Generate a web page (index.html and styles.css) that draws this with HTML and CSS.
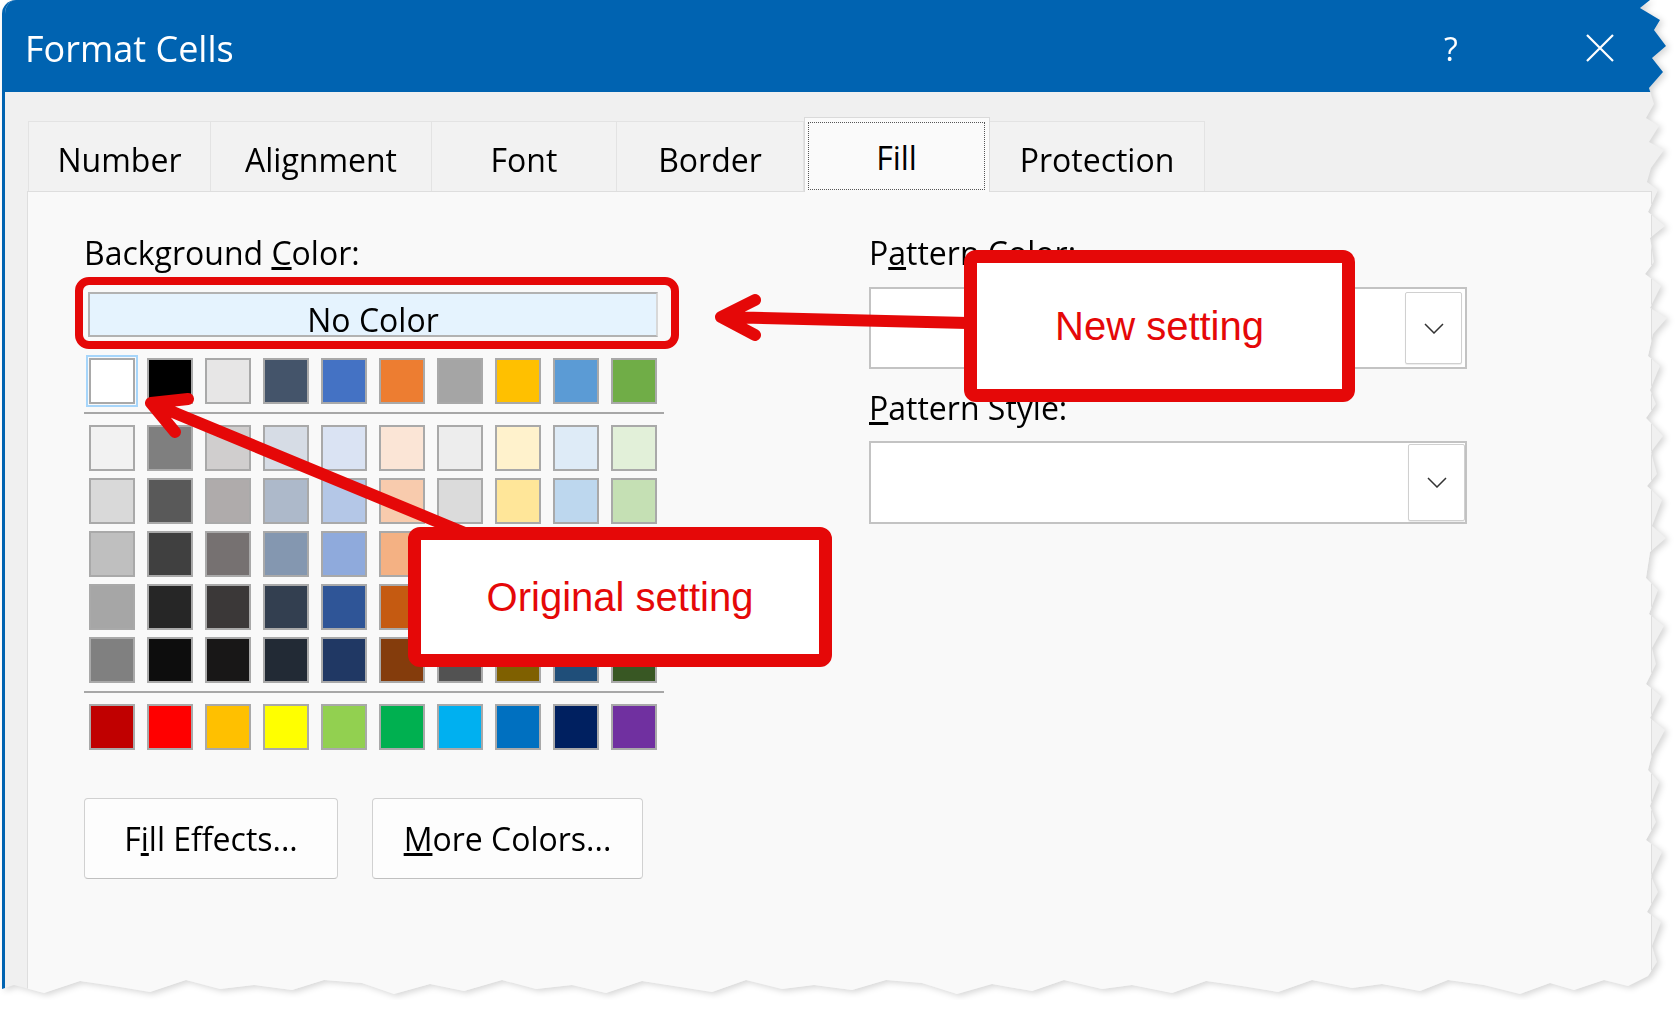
FILE: index.html
```html
<!DOCTYPE html>
<html lang="en">
<head>
  <meta charset="UTF-8">
  <title>Format Cells</title>
  <link rel="stylesheet" href="styles.css">
</head>
<body>
  <div class="sheet">
    <div class="dialog">
      <div class="titlebar">
        <span class="title">Format Cells</span>
        <span class="tb-help">?</span>
        <span class="tb-close">
          <svg width="28" height="28" viewBox="0 0 28 28"><path d="M1 1 L27 27 M27 1 L1 27" stroke="#fff" stroke-width="2.2" fill="none"/></svg>
        </span>
      </div>

      <div class="body">
        <div class="tabs">
          <div class="tab tab-first">Number</div>
          <div class="tab">Alignment</div>
          <div class="tab">Font</div>
          <div class="tab">Border</div>
          <div class="tab tab-active"><div class="focus">Fill</div></div>
          <div class="tab">Protection</div>
        </div>

        <div class="panel">
          <div class="col-left">
            <div class="label">Background <u>C</u>olor:</div>
            <div class="no-color">No Color</div>
            <div class="palette">
              <div class="row" id="rowMain"></div>
              <div class="sep"></div>
              <div class="theme" id="theme"></div>
              <div class="sep"></div>
              <div class="row" id="rowStandard"></div>
            </div>
            <div class="buttons">
              <button class="btn btn-fill">F<u>i</u>ll Effects...</button>
              <button class="btn btn-more"><u>M</u>ore Colors...</button>
            </div>
          </div>

          <div class="col-right">
            <div class="label">P<u>a</u>ttern Color:</div>
            <div class="select">
              <div class="select-btn">
                <svg width="20" height="11" viewBox="0 0 20 11"><polyline points="1,1 10,10 19,1" fill="none" stroke="#333" stroke-width="1.5"/></svg>
              </div>
            </div>
            <div class="label label-style"><u>P</u>attern Style:</div>
            <div class="select select-style">
              <div class="select-btn">
                <svg width="20" height="11" viewBox="0 0 20 11"><polyline points="1,1 10,10 19,1" fill="none" stroke="#333" stroke-width="1.5"/></svg>
              </div>
            </div>
          </div>
        </div>
      </div>
    </div>
  </div>

  <div class="annot">
    <svg width="1680" height="1013" viewBox="0 0 1680 1013">
      <rect x="79" y="281" width="596" height="64" rx="10" fill="none" stroke="#e50808" stroke-width="8"/>
      <g fill="none" stroke="#e50808" stroke-width="12" stroke-linecap="round" stroke-linejoin="round">
        <path d="M968 323 L721 317 M755 300 L721 317 L755 335"/>
        <path d="M472 536 L151 403 M188 399 L151 403 L175 432"/>
      </g>
    </svg>
    <div class="callout callout-new">New setting</div>
    <div class="callout callout-orig">Original setting</div>
  </div>

  <script>
    const mainRow = ["#ffffff", "#000000", "#e7e6e6", "#44546a", "#4472c4", "#ed7d31", "#a5a5a5", "#ffc000", "#5b9bd5", "#70ad47"];
    const themeRows = [
      ["#f2f2f2", "#7f7f7f", "#d0cece", "#d6dce5", "#dae3f3", "#fbe5d6", "#ededed", "#fff2cc", "#deebf7", "#e2f0d9"],
      ["#d9d9d9", "#595959", "#afabab", "#adb9ca", "#b4c7e7", "#f8cbad", "#dbdbdb", "#ffe699", "#bdd7ee", "#c5e0b4"],
      ["#bfbfbf", "#404040", "#767171", "#8497b0", "#8faadc", "#f4b183", "#c9c9c9", "#ffd966", "#9dc3e6", "#a9d18e"],
      ["#a6a6a6", "#262626", "#3b3838", "#333f50", "#2f5597", "#c55a11", "#7b7b7b", "#bf9000", "#2e75b6", "#548235"],
      ["#808080", "#0d0d0d", "#181717", "#222a35", "#203864", "#843c0c", "#525252", "#7f6000", "#1f4e79", "#385723"]
    ];
    const standard = ["#c00000", "#ff0000", "#ffc000", "#ffff00", "#92d050", "#00b050", "#00b0f0", "#0070c0", "#002060", "#7030a0"];

    function fillRow(el, colors) {
      colors.forEach(c => {
        const d = document.createElement("div");
        d.className = "swatch";
        d.style.background = c;
        el.appendChild(d);
      });
    }

    fillRow(document.getElementById("rowMain"), mainRow);
    document.querySelector("#rowMain .swatch").classList.add("selected");
    const theme = document.getElementById("theme");
    themeRows.forEach(r => {
      const row = document.createElement("div");
      row.className = "row";
      fillRow(row, r);
      theme.appendChild(row);
    });
    fillRow(document.getElementById("rowStandard"), standard);
  </script>
</body>
</html>
```

FILE: styles.css
```css
body { margin: 0; background: #fff; font-family: "Open Sans", "Noto Sans", sans-serif; color: #000; }

.sheet { width: 1670px; height: 1000px; margin-left: 2px; filter: drop-shadow(3px 2px 3px rgba(0,0,0,.16)); }
.dialog {
  height: 100%; box-sizing: border-box; background: #f0f0f0;
  border-left: 3px solid #0063b1; border-top-left-radius: 14px; overflow: hidden;
  clip-path: polygon(0 0, 1648px 0, 1638px 8px, 1658px 20px, 1652px 30px, 1664px 46px, 1650px 58px, 1661px 72px, 1647px 88px, 1652px 104px, 1644px 118px, 1657px 126px, 1647px 142px, 1662px 150px, 1649px 168px, 1645px 182px, 1656px 190px, 1646px 212px, 1663px 226px, 1648px 238px, 1652px 262px, 1643px 274px, 1659px 286px, 1648px 308px, 1665px 318px, 1651px 334px, 1646px 356px, 1658px 366px, 1648px 390px, 1654px 404px, 1644px 418px, 1661px 436px, 1649px 452px, 1655px 474px, 1645px 486px, 1660px 500px, 1650px 526px, 1664px 538px, 1648px 552px, 1644px 578px, 1656px 590px, 1647px 614px, 1662px 626px, 1650px 648px, 1654px 664px, 1644px 684px, 1659px 696px, 1648px 718px, 1663px 730px, 1650px 754px, 1646px 770px, 1657px 782px, 1648px 806px, 1654px 822px, 1644px 840px, 1660px 852px, 1649px 876px, 1656px 892px, 1645px 912px, 1659px 922px, 1650px 946px, 1655px 962px, 1646px 976px, 1626px 986px, 1602px 980px, 1572px 990px, 1548px 983px, 1518px 994px, 1482px 985px, 1446px 980px, 1418px 991px, 1380px 984px, 1350px 988px, 1310px 980px, 1276px 992px, 1240px 986px, 1204px 981px, 1170px 993px, 1130px 985px, 1100px 989px, 1062px 980px, 1030px 991px, 990px 984px, 955px 994px, 920px 983px, 884px 980px, 850px 990px, 812px 985px, 780px 989px, 744px 980px, 710px 992px, 672px 986px, 640px 981px, 604px 993px, 570px 985px, 534px 989px, 500px 980px, 462px 991px, 428px 984px, 392px 994px, 360px 983px, 322px 980px, 290px 990px, 252px 985px, 218px 989px, 184px 980px, 148px 992px, 112px 986px, 78px 981px, 42px 993px, 12px 985px, 0 989px);
}

.titlebar { height: 92px; box-sizing: border-box; background: #0063b1; color: #fff; display: flex; align-items: center; padding: 4px 42px 0 20px; }
.title { flex: 1; font-size: 36px; }
.tb-help { width: 60px; text-align: center; font-size: 32px; }
.tb-close { width: 60px; margin-left: 89px; display: flex; justify-content: center; }

.body { padding: 25px 0 0 22px; }

.tabs { display: grid; grid-template-columns: 183px 221px 185px 187px 186px 215px; align-items: end; height: 74px; margin-left: 1px; }
.tab {
  height: 70px; box-sizing: border-box; background: #f2f2f2;
  border-top: 1px solid #e3e3e3; border-right: 1px solid #e3e3e3;
  display: flex; align-items: center; justify-content: center;
  font-size: 32px; padding-top: 5px;
}
.tab-first { border-left: 1px solid #e3e3e3; }
.tab-active {
  height: 75px; margin-bottom: -1px; position: relative; z-index: 1;
  background: #fafafa; border: 1px solid #dadada; border-bottom: none;
  padding: 4px 4px 2px 3px; align-items: stretch; justify-content: stretch;
}
.focus { flex: 1; border: 1px dotted #555; display: flex; align-items: center; justify-content: center; padding-top: 2px; }

.panel {
  width: 1625px; height: 820px; box-sizing: border-box;
  background: #f9f9f9; border: 1px solid #dedede;
  display: grid; grid-template-columns: 785px 598px; align-content: start;
  padding: 41px 0 0 56px;
}

.label { font-size: 32px; line-height: 40px; height: 40px; white-space: nowrap; }

.no-color {
  margin: 19px 0 0 4px; width: 570px; height: 45px; box-sizing: border-box;
  background: #e5f3fe; border: 2px solid #b2b2b2; border-right-color: #d8d8d8;
  display: flex; align-items: center; justify-content: center;
  font-size: 32px; padding-top: 10px;
}

.palette { margin-top: 21px; }
.row { display: flex; gap: 12px; margin-left: 5px; }
.theme { display: flex; flex-direction: column; gap: 7px; }
.swatch { width: 46px; height: 46px; box-sizing: border-box; border: 2px solid #a9a9a9; }
.swatch.selected { outline: 2px solid #a6d5fa; outline-offset: 1px; }
.sep { width: 580px; height: 2px; background: #a7a7a7; margin: 8px 0 11px; }

.buttons { display: flex; gap: 34px; margin-top: 48px; }
.btn {
  height: 81px; background: #fdfdfd; border: 1px solid #d1d1d1; border-bottom-color: #c0c0c0;
  border-radius: 4px; font-family: "Open Sans", "Noto Sans", sans-serif; font-size: 32px; color: #000; padding: 0;
}
.btn-fill { width: 254px; }
.btn-more { width: 271px; }

.select {
  margin-top: 14px; width: 598px; height: 82px; box-sizing: border-box;
  background: #fff; border: 2px solid #c3c3c3;
  display: flex; justify-content: flex-end; padding: 3px;
}
.select-style { margin-top: 13px; height: 83px; padding: 1px 0 1px 0; }
.select-btn {
  width: 55px; background: #fff; border: 1px solid #d0d0d0; border-radius: 2px;
  box-shadow: 0 1px 1px rgba(0,0,0,.08);
  display: flex; align-items: center; justify-content: center;
}
.label-style { margin-top: 19px; }

.annot { position: absolute; left: 0; top: 0; width: 1680px; height: 1013px; pointer-events: none; }
.annot svg { position: absolute; left: 0; top: 0; }
.callout {
  position: absolute; box-sizing: border-box; background: #fff;
  border: 13px solid #e50808; border-radius: 12px;
  display: flex; align-items: center; justify-content: center;
  font-family: "Liberation Sans", Arial, sans-serif; font-size: 40px; color: #e50808;
}
.callout-new { left: 964px; top: 250px; width: 391px; height: 152px; }
.callout-orig { left: 408px; top: 527px; width: 424px; height: 140px; }
```
